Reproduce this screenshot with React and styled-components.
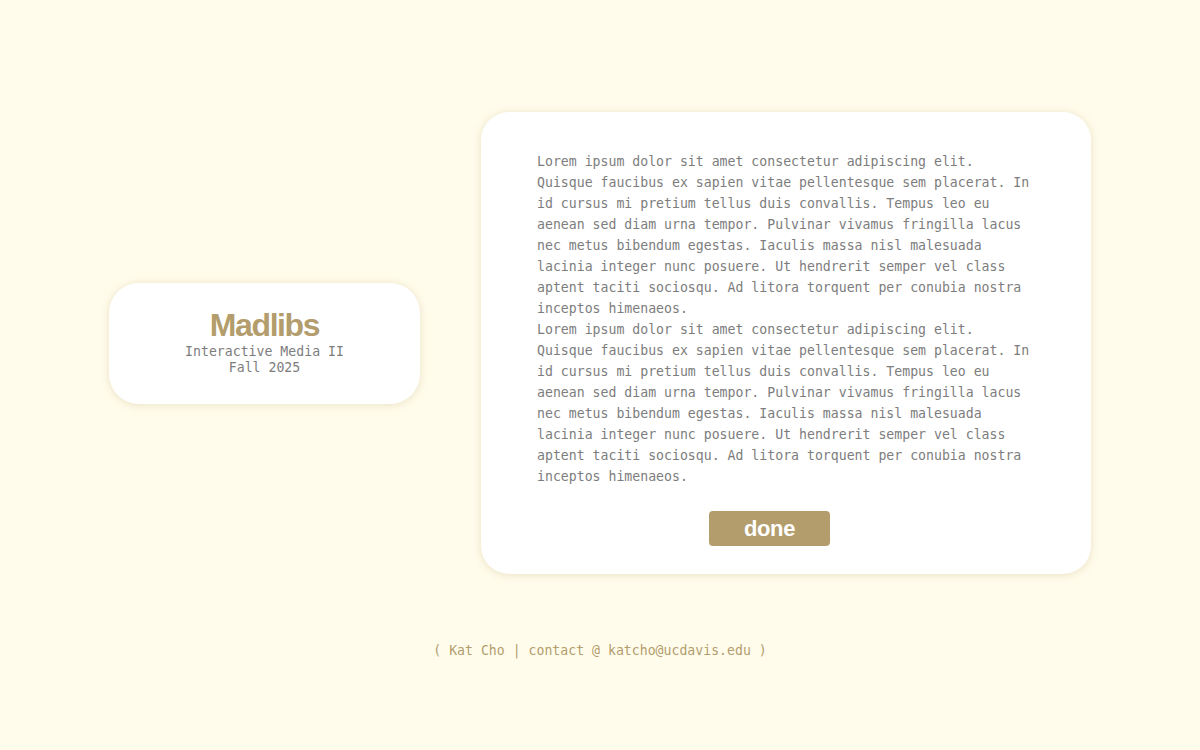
import React from 'react'
import styled, { createGlobalStyle } from 'styled-components'

const GOLD = '#b39d6c'
const MONO = `"DejaVu Sans Mono", "Liberation Mono", monospace`
const SANS = `"Liberation Sans", Arial, sans-serif`

const GlobalStyle = createGlobalStyle`
  html, body { margin: 0; padding: 0; background: #fffcec; }
  * { box-sizing: border-box; }
`

const Page = styled.div`
  min-height: 750px;
  padding-top: 112px;
  display: flex;
  flex-direction: column;
  align-items: center;
`

const Row = styled.main`
  display: flex;
  align-items: center;
  justify-content: center;
  gap: 61px;
`

const Card = styled.section`
  background: #ffffff;
  border-radius: ${p => p.$radius || 28}px;
  box-shadow: 0 1px 9px rgba(190, 170, 110, 0.32);
`

const TitleCard = styled(Card)`
  width: 311px;
  height: 121px;
  display: flex;
  flex-direction: column;
  align-items: center;
  justify-content: center;
  text-align: center;
`

const Title = styled.h1`
  margin: 0 0 4px;
  font-family: ${SANS};
  font-weight: 700;
  font-size: 32px;
  line-height: 30px;
  letter-spacing: -1.4px;
  color: ${GOLD};
`

const Sub = styled.div`
  font-family: ${MONO};
  font-size: 13.2px;
  line-height: 16px;
  color: #7d7d7d;
`

const TextCard = styled(Card)`
  width: 610px;
  height: 462px;
  padding: 39px 56px 0;
  display: flex;
  flex-direction: column;
`

const Body = styled.div`
  width: 100%;
  font-family: ${MONO};
  font-size: 13.2px;
  line-height: 21px;
  color: #7d7d7d;

  p { margin: 0; }
`

// the button sits centred under the first ~465px of the text column
const Actions = styled.div`
  width: 465px;
  margin-top: 24px;
  display: flex;
  justify-content: center;
`

const DoneButton = styled.button`
  width: 121px;
  height: 35px;
  border: none;
  border-radius: 4px;
  background: ${GOLD};
  color: #ffffff;
  font-family: ${SANS};
  font-weight: 700;
  font-size: 22px;
  letter-spacing: -0.4px;
  line-height: 33px;
  padding: 0;
  cursor: pointer;
`

const Footer = styled.footer`
  margin-top: 68px;
  font-family: ${MONO};
  font-size: 13.2px;
  line-height: 18px;
  color: ${GOLD};
  white-space: pre;
`

const LOREM = 'Lorem ipsum dolor sit amet consectetur adipiscing elit. Quisque faucibus ex sapien vitae pellentesque sem placerat. In id cursus mi pretium tellus duis convallis. Tempus leo eu aenean sed diam urna tempor. Pulvinar vivamus fringilla lacus nec metus bibendum egestas. Iaculis massa nisl malesuada lacinia integer nunc posuere. Ut hendrerit semper vel class aptent taciti sociosqu. Ad litora torquent per conubia nostra inceptos himenaeos.'

export default function App() {
  return (
    <>
      <GlobalStyle />
      <Page>
        <Row>
          <TitleCard $radius={30}>
            <Title>Madlibs</Title>
            <Sub>Interactive Media II</Sub>
            <Sub>Fall 2025</Sub>
          </TitleCard>
          <TextCard>
            <Body>
              <p>{LOREM}</p>
              <p>{LOREM}</p>
            </Body>
            <Actions>
              <DoneButton>done</DoneButton>
            </Actions>
          </TextCard>
        </Row>
        <Footer>( Kat Cho | contact @ katcho@ucdavis.edu )</Footer>
      </Page>
    </>
  )
}
